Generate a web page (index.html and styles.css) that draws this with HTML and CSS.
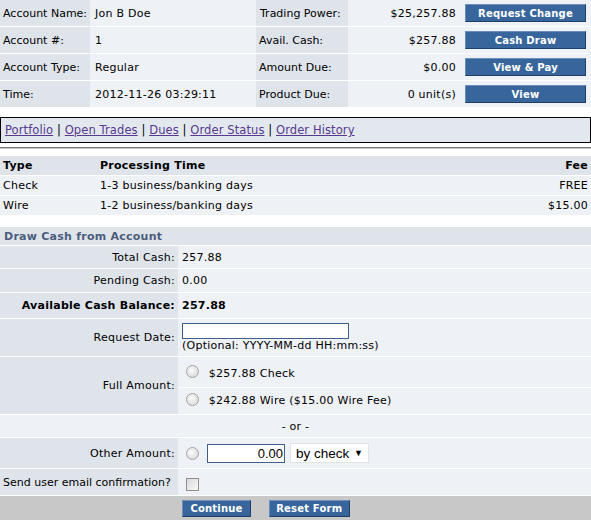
FILE: index.html
```html
<!DOCTYPE html>
<html lang="en">
<head>
    <meta charset="UTF-8">
    <title>Cash Draw</title>
    <link rel="stylesheet" href="styles.css">
</head>
<body>
    <table class="summary">
        <tr>
            <td class="lbl c1">Account Name:</td>
            <td class="val c2">Jon B Doe</td>
            <td class="lbl c3">Trading Power:</td>
            <td class="val c4">$25,257.88</td>
            <td class="val c5"><button class="btn top-btn">Request Change</button></td>
        </tr>
        <tr>
            <td class="lbl">Account #:</td>
            <td class="val">1</td>
            <td class="lbl">Avail. Cash:</td>
            <td class="val c4">$257.88</td>
            <td class="val c5"><button class="btn top-btn">Cash Draw</button></td>
        </tr>
        <tr>
            <td class="lbl">Account Type:</td>
            <td class="val">Regular</td>
            <td class="lbl">Amount Due:</td>
            <td class="val c4">$0.00</td>
            <td class="val c5"><button class="btn top-btn">View &amp; Pay</button></td>
        </tr>
        <tr>
            <td class="lbl">Time:</td>
            <td class="val">2012-11-26 03:29:11</td>
            <td class="lbl">Product Due:</td>
            <td class="val c4">0 unit(s)</td>
            <td class="val c5"><button class="btn top-btn">View</button></td>
        </tr>
    </table>

    <div class="nav">
        <a href="#">Portfolio</a> | <a href="#">Open Trades</a> | <a href="#">Dues</a> | <a href="#">Order Status</a> | <a href="#">Order History</a>
    </div>

    <hr class="rule">

    <table class="fees">
        <tr class="head">
            <th class="f1">Type</th>
            <th>Processing Time</th>
            <th class="fee">Fee</th>
        </tr>
        <tr>
            <td>Check</td>
            <td>1-3 business/banking days</td>
            <td class="fee">FREE</td>
        </tr>
        <tr>
            <td>Wire</td>
            <td>1-2 business/banking days</td>
            <td class="fee">$15.00</td>
        </tr>
    </table>

    <form class="draw">
        <table class="form">
            <tr class="r-head">
                <td colspan="2" class="title">Draw Cash from Account</td>
            </tr>
            <tr class="r-total">
                <td class="flbl">Total Cash:</td>
                <td class="fval">257.88</td>
            </tr>
            <tr class="r-pending">
                <td class="flbl">Pending Cash:</td>
                <td class="fval">0.00</td>
            </tr>
            <tr class="r-avail">
                <td class="flbl strong">Available Cash Balance:</td>
                <td class="fval strong">257.88</td>
            </tr>
            <tr class="r-date">
                <td class="flbl">Request Date:</td>
                <td class="fval">
                    <input type="text" class="date-input"><br>
                    <span class="hint">(Optional: YYYY-MM-dd HH:mm:ss)</span>
                </td>
            </tr>
            <tr class="r-full first">
                <td class="flbl" rowspan="2">Full Amount:</td>
                <td class="fval"><label class="opt"><input type="radio" name="amt" class="radio"> $257.88 Check</label></td>
            </tr>
            <tr class="r-full second">
                <td class="fval"><label class="opt"><input type="radio" name="amt" class="radio"> $242.88 Wire ($15.00 Wire Fee)</label></td>
            </tr>
            <tr class="r-or">
                <td colspan="2" class="or">- or -</td>
            </tr>
            <tr class="r-other">
                <td class="flbl">Other Amount:</td>
                <td class="fval">
                    <div class="other">
                        <input type="radio" name="amt" class="radio">
                        <input type="text" class="amount" value="0.00">
                        <span class="select">by check <span class="arrow">&#9660;</span></span>
                    </div>
                </td>
            </tr>
            <tr class="r-email">
                <td class="flbl left">Send user email confirmation?</td>
                <td class="fval"><input type="checkbox" class="check"></td>
            </tr>
            <tr class="r-actions">
                <td></td>
                <td class="actions">
                    <button type="button" class="btn act continue">Continue</button>
                    <button type="reset" class="btn act reset">Reset Form</button>
                </td>
            </tr>
        </table>
    </form>
</body>
</html>
```

FILE: styles.css
```css
body {
    margin: 0;
    padding: 0;
    font-family: "DejaVu Sans", Verdana, sans-serif;
    font-size: 11px;
    letter-spacing: 0.25px;
    color: #000;
    background-color: #fff;
}
table {
    width: 100%;
    border-collapse: collapse;
}
td, th {
    padding: 0;
    white-space: nowrap;
}

/* account summary */
.summary td {
    height: 26px;
    border-bottom: 1px solid #fff;
}
.summary tr:last-child td {
    border-bottom: 0;
}
.summary .lbl {
    background-color: #dfe4eb;
    padding-left: 3px;
    letter-spacing: 0;
}
.summary .val {
    background-color: #eef1f5;
}
.c1 { width: 87px; }
.c2 { width: 161px; padding-left: 5px; }
.c3 { width: 88px; padding-left: 4px !important; }
.c4 { width: 108px; text-align: right; padding-right: 6px; }
.c5 { padding-left: 3px; }
.summary td.val:nth-child(2) {
    padding-left: 5px;
}

.btn {
    font-family: "DejaVu Sans", Verdana, sans-serif;
    font-size: 10px;
    font-weight: bold;
    letter-spacing: 0.2px;
    color: #fff;
    background-color: #38669c;
    border: 1px solid;
    border-color: #6a8fbb #1e3f66 #1e3f66 #6a8fbb;
    padding: 0;
    margin: 0;
    cursor: pointer;
}
.top-btn {
    width: 121px;
    height: 18px;
    display: block;
}

/* links box */
.nav {
    margin-top: 10px;
    border: 1px solid #000;
    background-color: #e3e8ee;
    padding: 5px 4px;
    font-size: 11.5px;
    letter-spacing: 0.1px;
    line-height: 14px;
}
.nav a {
    color: #56398e;
}
.rule {
    margin: 4px 0 0 0;
    border: 0;
    border-top: 1px solid #777;
    border-bottom: 1px solid #c8c8c8;
    height: 0;
}

/* fee table */
.fees {
    margin-top: 7px;
}
.fees th, .fees td {
    height: 19px;
    text-align: left;
    padding: 0 3px;
    border-bottom: 1px solid #fff;
}
.fees .head th {
    background-color: #dfe4eb;
}
.fees td {
    background-color: #eef1f5;
}
.fees .f1 {
    width: 91px;
}
.fees .fee {
    text-align: right;
}

/* draw cash form */
.draw {
    margin: 11px 0 0 0;
}
.form td {
    border-bottom: 1px solid #fff;
}
.form .title {
    background-color: #dfe4eb;
    color: #4b5d7b;
    font-weight: bold;
    height: 18px;
    padding-left: 4px;
}
.flbl {
    width: 175px;
    background-color: #dfe4eb;
    text-align: right;
    padding-right: 3px !important;
}
.flbl.left {
    text-align: left;
    letter-spacing: 0;
    padding-left: 3px !important;
    padding-right: 0 !important;
}
.fval {
    background-color: #eef1f5;
    padding-left: 4px !important;
}
.strong {
    font-weight: bold;
}
.r-total td { height: 22px; }
.r-pending td { height: 23px; }
.r-avail td { height: 25px; }
.r-date td { height: 37px; }
.r-full.first td.fval { height: 27px; padding-top: 3px; }
.r-full.second td { height: 26px; }
.r-or td { height: 22px; }
.r-other td { height: 30px; }
.r-email td { height: 26px; }

.date-input {
    width: 167px;
    height: 16px;
    box-sizing: border-box;
    border: 1px solid #3f5f8a;
    background: #fff;
    margin: 0;
    padding: 0;
}
.hint {
    line-height: 14px;
}
.radio {
    appearance: none;
    -webkit-appearance: none;
    width: 13px;
    height: 13px;
    border-radius: 50%;
    border: 1px solid #a4a4a4;
    background: radial-gradient(circle at 40% 40%, #fbfbfb, #d2d2d2);
    margin: 0;
    vertical-align: middle;
}
.opt .radio {
    margin: 0 6px 0 4px;
    position: relative;
    top: -2px;
}
.or {
    background-color: #eef1f5;
    text-align: center;
}
.other {
    display: flex;
    align-items: center;
}
.other .radio {
    margin: 0 8px 0 4px;
}
.amount {
    width: 78px;
    height: 19px;
    box-sizing: border-box;
    border: 1px solid #3f5f8a;
    font-family: "Liberation Sans", Arial, sans-serif;
    font-size: 13px;
    text-align: right;
    padding: 0 1px;
    margin: 0;
}
.select {
    margin-left: 5px;
    width: 79px;
    height: 20px;
    box-sizing: border-box;
    background: #fff;
    border: 1px solid #e0e3e8;
    font-family: "Liberation Sans", Arial, sans-serif;
    font-size: 13.5px;
    letter-spacing: 0;
    display: flex;
    align-items: center;
    justify-content: space-between;
    padding: 0 5px 0 5px;
}
.arrow {
    font-size: 9px;
}
.check {
    appearance: none;
    -webkit-appearance: none;
    width: 13px;
    height: 13px;
    border: 1px solid #8e8e8e;
    background: linear-gradient(135deg, #d8d8d8, #fafafa);
    margin: 0 0 0 4px;
    vertical-align: middle;
    position: relative;
    top: 2px;
}
.r-actions td {
    background-color: #c8c8c8;
    height: 25px;
    border-bottom: 0;
}
.actions {
    padding-left: 4px !important;
}
.act {
    height: 17px;
    vertical-align: middle;
}
.continue {
    width: 69px;
}
.reset {
    width: 81px;
    margin-left: 14px;
}
```
